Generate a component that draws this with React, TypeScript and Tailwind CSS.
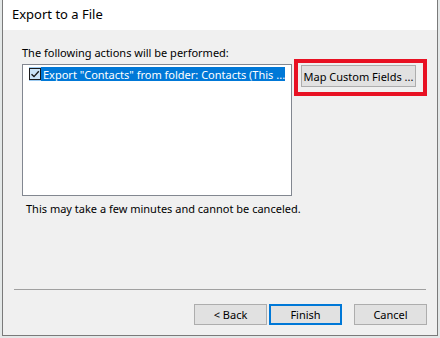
const font = { fontFamily: '"Noto Sans", "Segoe UI", Arial, sans-serif' };

function CheckBox() {
  return (
    <div className="flex h-[14px] w-[15px] items-center justify-center bg-[#9ccaf0]">
      <div className="flex h-[12px] w-[12px] items-center justify-center border border-[#1b1b1b] bg-[#cce4f7]">
        <svg width="10" height="10" viewBox="0 0 10 10">
          <path d="M1.5 5.2 L4 7.6 L8.8 2.2" fill="none" stroke="#1b1b1b" strokeWidth="1.4" />
        </svg>
      </div>
    </div>
  );
}

function WinButton({ label, primary }: { label: string; primary?: boolean }) {
  return (
    <button
      type="button"
      className={
        "h-[21px] w-[73px] bg-[#e1e1e1] text-[11px] leading-none text-black " +
        (primary ? "border-2 border-[#0078d7]" : "border border-[#adadad]")
      }
    >
      {label}
    </button>
  );
}

export default function App() {
  return (
    <div className="h-[338px] w-[440px] overflow-hidden bg-[#e4e8e8]" style={font}>
      <div className="ml-[2px] flex h-[336px] w-[436px] flex-col border-x border-b border-[#7a7a7a]">
        <div className="flex h-[30px] items-center bg-white pl-[9px] text-[13px] text-black">
          Export to a File
        </div>

        <div className="flex flex-1 flex-col bg-[#f0f0f0] px-[19px] text-[11px] text-black">
          <div className="mt-[15px] h-[16px] leading-[16px]">The following actions will be performed:</div>

          <div className="mt-[3px] flex items-start">
            <div className="h-[132px] w-[270px] border border-[#828790] bg-white px-[6px] pt-[2px]">
              <div className="flex h-[14px] items-center">
                <CheckBox />
                <div className="flex h-[14px] flex-1 items-center bg-[#0078d7] pl-[2px] leading-none whitespace-nowrap text-white">
                  Export "Contacts" from folder: Contacts (This ...
                </div>
              </div>
            </div>

            <div className="relative ml-[9px] mt-[1px]">
              <button
                type="button"
                className="h-[22px] w-[115px] border border-[#adadad] bg-[#e1e1e1] text-[11px] leading-none whitespace-nowrap text-black"
              >
                Map Custom Fields ...
              </button>
              <div className="pointer-events-none absolute -top-[6px] -left-[7px] h-[37px] w-[133px] border-4 border-[#e81123]" />
            </div>
          </div>

          <div className="mt-[5px] pl-[4px] leading-[16px]">This may take a few minutes and cannot be canceled.</div>

          <div className="mt-[72px] -mx-[8px] border-t border-[#a0a0a0]" />

          <div className="mt-[14px] -mr-[9px] flex justify-end">
            <WinButton label="< Back" />
            <div className="ml-[2px]">
              <WinButton label="Finish" primary />
            </div>
            <div className="ml-[12px]">
              <WinButton label="Cancel" />
            </div>
          </div>
        </div>
      </div>
    </div>
  );
}
